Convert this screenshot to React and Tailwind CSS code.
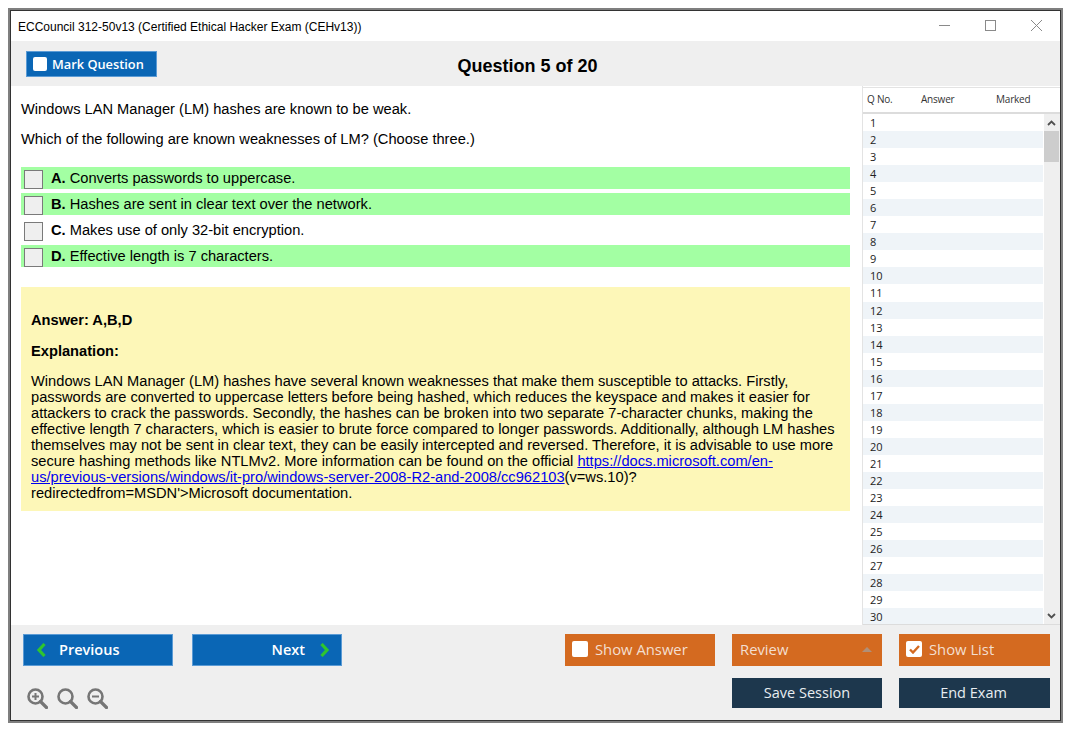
import React from 'react';

const options = [
    { key: 'A.', text: 'Converts passwords to uppercase.', correct: true },
    { key: 'B.', text: 'Hashes are sent in clear text over the network.', correct: true },
    { key: 'C.', text: 'Makes use of only 32-bit encryption.', correct: false },
    { key: 'D.', text: 'Effective length is 7 characters.', correct: true },
];

const rows = Array.from({ length: 30 }, (_, i) => i + 1);

const ZoomIcon = ({ type }) => (
    <svg width="21" height="21" viewBox="0 0 21 21" fill="none" stroke="#767676" strokeWidth="2.6">
        <circle cx="8.5" cy="8.5" r="7" />
        <path d="M13.5 13.5L19.5 19.5" strokeWidth="3.2" strokeLinecap="round" />
        {type !== 'reset' && <path d="M5 8.5H12" strokeWidth="2" />}
        {type === 'in' && <path d="M8.5 5V12" strokeWidth="2" />}
    </svg>
);

const Chevron = ({ dir }) => (
    <svg width="10" height="14" viewBox="0 0 10 14" fill="none" stroke="#2fc52f" strokeWidth="3.2">
        <path d={dir === 'left' ? 'M8.5 1L3 7L8.5 13' : 'M1.5 1L7 7L1.5 13'} />
    </svg>
);

const App = () => {
    return (
        <div className="w-[1075px] h-[735px] bg-white pt-2 pl-2 font-['Liberation_Sans',sans-serif] overflow-hidden">
            {/* Window frame */}
            <div className="w-[1055px] h-[715px] border-2 border-[#7f7f7f]">
                <div className="h-full border border-[#333] flex flex-col bg-white">
                    {/* Title bar */}
                    <div className="h-[30px] shrink-0 flex items-center justify-between pl-[7px]">
                        <span className="text-[12px] text-black pt-px">ECCouncil 312-50v13 (Certified Ethical Hacker Exam (CEHv13))</span>
                        <div className="flex items-center gap-[35px] pr-[18px] pb-[2px]">
                            <svg width="11" height="11" viewBox="0 0 11 11" stroke="#8a8a8a" strokeWidth="1"><path d="M0 5.5H11" /></svg>
                            <svg width="11" height="11" viewBox="0 0 11 11" fill="none" stroke="#8a8a8a" strokeWidth="1"><rect x="0.5" y="0.5" width="10" height="10" /></svg>
                            <svg width="11" height="11" viewBox="0 0 11 11" stroke="#8a8a8a" strokeWidth="1"><path d="M0 0L11 11M11 0L0 11" /></svg>
                        </div>
                    </div>

                    {/* Toolbar */}
                    <div className="h-[45px] shrink-0 bg-[#efefef] flex items-center pl-[15px]">
                        <button className="w-[131px] h-[26px] bg-[#0a66b5] border border-[#5b9bd5] flex items-center pl-[6px] gap-[5px] text-white text-[12.8px] font-semibold font-['Open_Sans',sans-serif]">
                            <span className="w-[14px] h-[14px] bg-white rounded-[2px]"></span>
                            <span className="pt-[2px]">Mark Question</span>
                        </button>
                        <h1 className="flex-1 text-center text-[18px] font-bold text-black pr-[162px] pt-[6px]">Question 5 of 20</h1>
                    </div>

                    {/* Main */}
                    <div className="flex-1 min-h-0 flex">
                        <div className="w-[851px] shrink-0 pl-[10px] pr-[12px] pt-[14px]">
                            <p className="text-[14.67px] leading-[18px] text-black">Windows LAN Manager (LM) hashes are known to be weak.</p>
                            <p className="text-[14.67px] leading-[18px] text-black mt-[12px]">Which of the following are known weaknesses of LM? (Choose three.)</p>

                            <div className="mt-[19px] flex flex-col gap-[4px]">
                                {options.map((o) => (
                                    <div key={o.key} className={`h-[22px] flex items-center pl-[3px] ${o.correct ? 'bg-[#a3ffa3]' : ''}`}>
                                        <span className="w-[19px] h-[19px] self-end bg-[#efefef] border border-[#7a7a7a]"></span>
                                        <span className="ml-[8px] text-[14.67px] text-black"><b>{o.key}</b> {o.text}</span>
                                    </div>
                                ))}
                            </div>

                            <div className="mt-[20px] h-[224px] bg-[#fdf7b8] pl-[10px] pr-[10px] pt-[25px] text-[14.67px] leading-[16px] text-black">
                                <p className="font-bold">Answer: A,B,D</p>
                                <p className="font-bold mt-[15px]">Explanation:</p>
                                <p className="mt-[14px]">
                                    Windows LAN Manager (LM) hashes have several known weaknesses that make them susceptible to attacks. Firstly,<br />
                                    passwords are converted to uppercase letters before being hashed, which reduces the keyspace and makes it easier for<br />
                                    attackers to crack the passwords. Secondly, the hashes can be broken into two separate 7-character chunks, making the<br />
                                    effective length 7 characters, which is easier to brute force compared to longer passwords. Additionally, although LM hashes<br />
                                    themselves may not be sent in clear text, they can be easily intercepted and reversed. Therefore, it is advisable to use more<br />
                                    secure hashing methods like NTLMv2. More information can be found on the official{' '}
                                    <a href="#" className="text-[#0000ee] underline">https://docs.microsoft.com/en-<br />us/previous-versions/windows/it-pro/windows-server-2008-R2-and-2008/cc962103</a>(v=ws.10)?<br />
                                    redirectedfrom=MSDN'&gt;Microsoft documentation.
                                </p>
                            </div>
                        </div>

                        {/* Question list */}
                        <div className="flex-1 min-w-0 flex flex-col border-l border-[#e3e3e3] overflow-hidden font-['Open_Sans',sans-serif]">
                            <div className="h-[27px] shrink-0 mt-px border-t border-[#e3e3e3] border-b-[2px] border-b-[#dcdcdc] flex items-center text-[10px] text-[#333] tracking-[-0.2px] pb-[2px]">
                                <span className="w-[58px] pl-[4px]">Q No.</span>
                                <span className="w-[75px]">Answer</span>
                                <span>Marked</span>
                            </div>
                            <div className="flex-1 min-h-0 flex border-b border-[#dcdcdc]">
                                <div className="flex-1 min-w-0 overflow-hidden">
                                    {rows.map((n) => (
                                        <div key={n} className={`h-[17.06px] pl-[7px] text-[11px] leading-[17px] text-[#222] ${n % 2 === 0 ? 'bg-[#eff4f8]' : ''}`}>{n}</div>
                                    ))}
                                </div>
                                <div className="w-[17px] shrink-0 bg-[#efefef] border-l border-white flex flex-col pr-px">
                                    <div className="h-[17px] flex items-center justify-center">
                                        <svg width="9" height="6" viewBox="0 0 9 6" fill="none" stroke="#505050" strokeWidth="1.8"><path d="M1 5L4.5 1.5L8 5" /></svg>
                                    </div>
                                    <div className="h-[31px] bg-[#cdcdcd]"></div>
                                    <div className="flex-1"></div>
                                    <div className="h-[17px] flex items-center justify-center">
                                        <svg width="9" height="6" viewBox="0 0 9 6" fill="none" stroke="#505050" strokeWidth="1.8"><path d="M1 1L4.5 4.5L8 1" /></svg>
                                    </div>
                                </div>
                            </div>
                        </div>
                    </div>

                    {/* Bottom bar */}
                    <div className="h-[95px] shrink-0 bg-[#efefef] flex justify-between pl-[12px] pr-[10px] pt-[9px] font-['Open_Sans',sans-serif]">
                        <div className="flex flex-col justify-between pb-[11px]">
                            <div className="flex gap-[19px]">
                                <button className="w-[150px] h-[32px] bg-[#0a66b5] border border-[#5b9bd5] flex items-center pl-[12px] gap-[13px] text-white text-[14.5px] font-semibold">
                                    <Chevron dir="left" />Previous
                                </button>
                                <button className="w-[150px] h-[32px] bg-[#0a66b5] border border-[#5b9bd5] flex items-center justify-end pr-[11px] gap-[15px] text-white text-[14.5px] font-semibold">
                                    Next<Chevron dir="right" />
                                </button>
                            </div>
                            <div className="flex gap-[9px] pl-[4px]">
                                <ZoomIcon type="in" />
                                <ZoomIcon type="reset" />
                                <ZoomIcon type="out" />
                            </div>
                        </div>
                        <div className="flex flex-col gap-[12px]">
                            <div className="flex gap-[17px]">
                                <button className="w-[150px] h-[32px] bg-[#d46a20] flex items-center pl-[7px] gap-[7px] pb-[2px] text-[#f3dfd0] text-[14.8px]">
                                    <span className="w-[16px] h-[16px] bg-white rounded-[2px]"></span>Show Answer
                                </button>
                                <button className="w-[150px] h-[32px] bg-[#d46a20] flex items-center justify-between pl-[8px] pr-[10px] pb-[2px] text-[#f3dfd0] text-[14.8px]">
                                    Review
                                    <span className="w-0 h-0 border-x-[5px] border-x-transparent border-b-[5px] border-b-[#b08f78]"></span>
                                </button>
                                <button className="w-[151px] h-[32px] bg-[#d46a20] flex items-center pl-[7px] gap-[7px] pb-[2px] text-[#f3dfd0] text-[14.8px]">
                                    <span className="w-[16px] h-[16px] bg-white rounded-[2px] flex items-center justify-center">
                                        <svg width="11" height="9" viewBox="0 0 11 9" fill="none" stroke="#d46a20" strokeWidth="2.4"><path d="M1 4.5L4 7.5L10 1" /></svg>
                                    </span>Show List
                                </button>
                            </div>
                            <div className="flex gap-[17px] justify-end">
                                <button className="w-[150px] h-[30px] bg-[#1d374d] text-[#e8edf1] text-[14.5px]">Save Session</button>
                                <button className="w-[151px] h-[30px] bg-[#1d374d] text-[#e8edf1] text-[14.5px] pr-[2px]">End Exam</button>
                            </div>
                        </div>
                    </div>
                </div>
            </div>
        </div>
    );
};

export default App;
